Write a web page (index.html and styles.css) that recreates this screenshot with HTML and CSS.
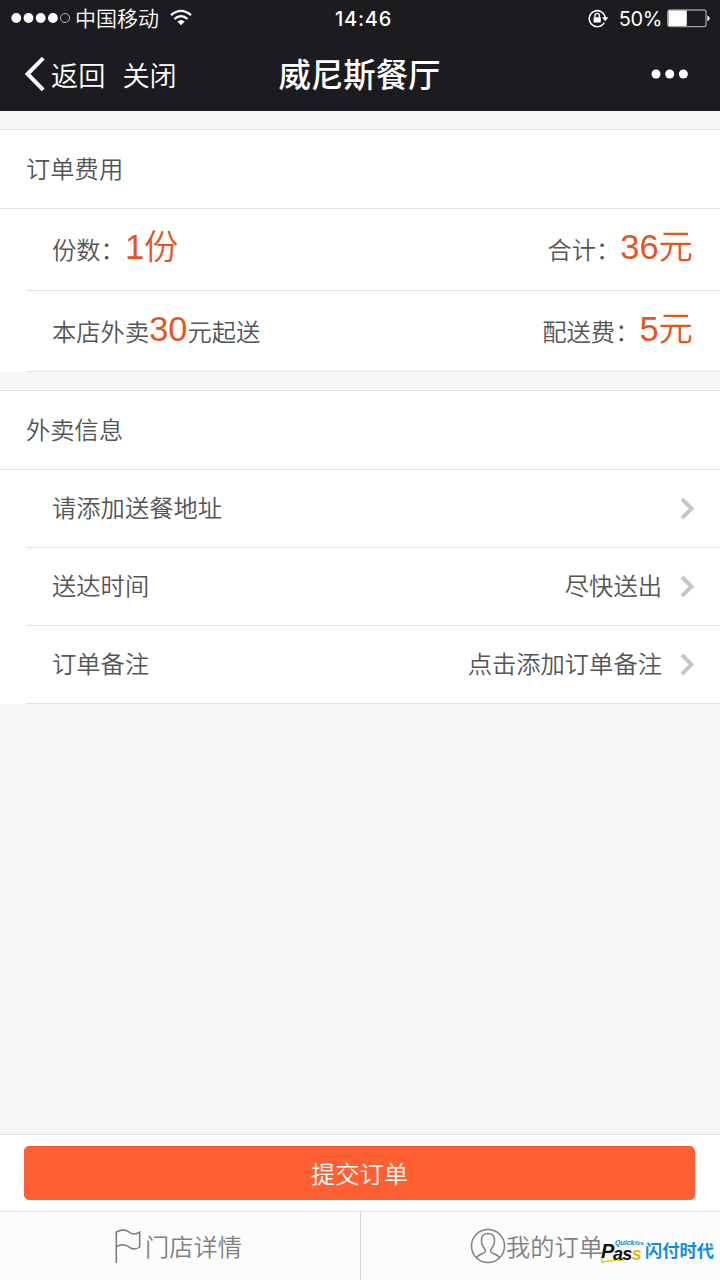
FILE: index.html
```html
<!DOCTYPE html>
<html lang="zh-CN">
<head>
<meta charset="UTF-8">
<meta name="viewport" content="width=720">
<title>威尼斯餐厅</title>
<link rel="stylesheet" href="styles.css">
</head>
<body>
<div class="page">
	<header class="header">
		<div class="status">
			<div class="status_left">
				<svg class="signal" width="62" height="12" viewBox="0 0 62 12">
					<g fill="#fff"><circle cx="5.3" cy="6" r="4.9"/><circle cx="17.5" cy="6" r="4.9"/><circle cx="29.7" cy="6" r="4.9"/><circle cx="41.9" cy="6" r="4.9"/></g>
					<circle cx="54" cy="6" r="4.5" fill="none" stroke="#b5b5b8"/>
				</svg>
				<span class="carrier">中国移动</span>
				<svg class="wifi" width="22" height="17" viewBox="0 0 22 17">
					<g fill="none" stroke="#fff" stroke-width="2.3"><path d="M1 6.2Q11 -2.4 21 6.2"/><path d="M4.4 10Q11 4.3 17.6 10"/></g>
					<path d="M7.3 12.4Q11 9.4 14.7 12.4L11 16.2z" fill="#fff"/>
				</svg>
			</div>
			<div class="time">14:46</div>
			<div class="status_right">
				<svg class="lock" width="21" height="19" viewBox="0 0 21 19">
					<path d="M16.2 13.6A8 8 0 1 1 17.2 9" fill="none" stroke="#fff" stroke-width="1.5"/>
					<path d="M14 8.2h6.4l-3.2 4z" fill="#fff"/>
					<rect x="5.6" y="8.2" width="7.2" height="5.4" rx=".6" fill="#fff"/>
					<path d="M7 8.5V6.6a2.2 2.2 0 0 1 4.4 0v1.9" fill="none" stroke="#fff" stroke-width="1.4"/>
				</svg>
				<span class="percent">50%</span>
				<svg class="battery" width="43" height="19" viewBox="0 0 43 19">
					<rect x=".7" y="1" width="38.3" height="16.6" rx="2" fill="none" stroke="#9b9b9e" stroke-width="1.3"/>
					<rect x="1.4" y="1.6" width="18.4" height="15.4" rx="1" fill="#fff"/>
					<path d="M40.4 6.4q2.2.8 2.2 2.9t-2.2 2.9z" fill="#fff"/>
				</svg>
			</div>
		</div>
		<div class="nav">
			<div class="nav_left">
				<svg class="back" width="20" height="34" viewBox="0 0 20 34"><path d="M18.2 1.2L2.6 17l15.6 15.8" fill="none" stroke="#fff" stroke-width="4"/></svg>
				<a class="nav_link">返回</a>
				<a class="nav_link">关闭</a>
			</div>
			<h1 class="nav_title">威尼斯餐厅</h1>
			<svg class="more" width="38" height="10" viewBox="0 0 38 10" fill="#fff"><circle cx="5" cy="5" r="4.5"/><circle cx="18.7" cy="5" r="4.5"/><circle cx="32.4" cy="5" r="4.5"/></svg>
		</div>
	</header>

	<section class="card">
		<h2 class="card_title">订单费用</h2>
		<div class="row fee">
			<div>份数：<em class="num">1份</em></div>
			<div>合计：<em class="num">36元</em></div>
		</div>
		<div class="row fee">
			<div>本店外卖<em class="num">30</em>元起送</div>
			<div>配送费：<em class="num">5元</em></div>
		</div>
	</section>

	<section class="card">
		<h2 class="card_title">外卖信息</h2>
		<div class="row info">
			<span>请添加送餐地址</span>
			<span class="value"><svg class="arrow" width="15" height="23" viewBox="0 0 15 23"><path d="M2 2l9.5 9.5L2 21"/></svg></span>
		</div>
		<div class="row info">
			<span>送达时间</span>
			<span class="value">尽快送出<svg class="arrow" width="15" height="23" viewBox="0 0 15 23"><path d="M2 2l9.5 9.5L2 21"/></svg></span>
		</div>
		<div class="row info">
			<span>订单备注</span>
			<span class="value">点击添加订单备注<svg class="arrow" width="15" height="23" viewBox="0 0 15 23"><path d="M2 2l9.5 9.5L2 21"/></svg></span>
		</div>
	</section>

	<footer class="footer">
		<div class="submit_bar"><button class="submit">提交订单</button></div>
		<div class="tabs">
			<a class="tab">
				<svg width="27" height="36" viewBox="0 0 27 36" fill="none" stroke="#777" stroke-width="1.5"><path d="M1.3 35V4C7 1 11 1.5 14 4s7 2.6 10.7.2v14.800C21 21.5 17 21.5 14 19S6 16 1.3 18.7"/></svg>
				<span class="tab_text flag_text">门店详情</span>
			</a>
			<a class="tab tab_order">
				<svg width="36" height="36" viewBox="0 0 36 36" fill="none" stroke="#808080" stroke-width="1.5"><circle cx="18" cy="18" r="16.5"/><path d="M6.5 29.7c1.5-3 5-3.5 8-5 1.5-.8 1-2.7-.1-4.200C12 17.5 11.300 14.5 11.5 11.5 11.800 7.5 14.5 5.5 18 5.500s6.200 2 6.500 6c.2 3-.5 6-2.900 9-1.100 1.500-1.600 3.400-.1 4.200 3 1.500 6.500 2 8 5"/></svg>
				<span class="tab_text">我的订单</span>
			</a>
		</div>
	</footer>

	<div class="watermark">
		<div class="pass">
			<svg class="swoosh" width="24" height="7" viewBox="0 0 24 7"><path d="M1 1L.5 6Q10 3 23 4 10 4.5 .5 6.5z" fill="#e8c820" stroke="#e8c820" stroke-width=".8"/></svg>
			<span class="pass_p">P</span>
			<div class="pass_rest">
				<span class="quick">Quick<small>Xtra</small></span>
				<span class="pass_ass">as<i>s</i></span>
			</div>
		</div>
		<span class="brand">闪付时代</span>
	</div>
</div>
</body>
</html>
```
FILE: styles.css
```css
*{
	box-sizing: border-box;
}
body{
	margin: 0;
	background-color: #f7f7f7;
	font-family: "Liberation Sans", "Noto Sans CJK SC", sans-serif;
	font-weight: 350;
	color: #555;
}
.page{
	position: relative;
	display: flex;
	flex-direction: column;
	width: 720px;
	height: 1280px;
	overflow: hidden;
}
svg{
	display: block;
	flex: none;
}
.header{
	height: 111px;
	background-color: #1c1b20;
	color: #fff;
}
.status{
	display: grid;
	grid-template-columns: 1fr auto 1fr;
	align-items: center;
	height: 36px;
	padding: 0 10px 0 11px;
}
.status_left,
.status_right{
	display: flex;
	align-items: center;
}
.status_right{
	justify-content: flex-end;
}
.carrier{
	margin-left: 2px;
	padding-top: 2px;
	font-size: 21px;
	line-height: 34px;
}
.wifi{
	margin: 0 0 2px 11px;
}
.time{
	padding-left: 6px;
	padding-top: 1px;
	font-family: Inter, sans-serif;
	font-size: 20px;
	font-weight: 500;
	letter-spacing: .8px;
}
.lock{
	margin-right: -1px;
}
.percent{
	margin: 0 5px 0 11px;
	padding-top: 1px;
	font-family: Inter, sans-serif;
	font-size: 20px;
	font-weight: 400;
	letter-spacing: -.4px;
}
.nav{
	display: grid;
	grid-template-columns: 1fr auto 1fr;
	align-items: center;
	height: 75px;
	padding: 0 31px 0 25px;
}
.nav_left{
	display: flex;
	align-items: center;
}
.nav_link{
	margin: 0 17px 0 0;
	padding-top: 5px;
	font-size: 27.2px;
	line-height: 71px;
}
.back{
	margin-right: 6px;
}
.nav_title{
	margin: 0 0 0 5px;
	padding-top: 3px;
	font-size: 32.4px;
	font-weight: 500;
	line-height: 72px;
}
.more{
	justify-self: end;
}
.card{
	margin-top: 18px;
	border-top: 1px solid #e3e3e3;
	background-color: #fff;
}
.card_title{
	height: 79px;
	margin: 0;
	padding-left: 26px;
	border-bottom: 1px solid #e3e3e3;
	font-size: 24.3px;
	font-weight: 350;
	line-height: 79px;
}
.row{
	display: flex;
	justify-content: space-between;
	margin-left: 26px;
	padding: 0 27px 0 26px;
	border-bottom: 1px solid #e3e3e3;
	font-size: 24.3px;
}
.fee{
	height: 82px;
	line-height: 77px;
}
.fee + .fee{
	height: 81px;
}
.num{
	color: #e2571e;
	font-size: 34.4px;
	font-style: normal;
}
.info{
	height: 78px;
	line-height: 77px;
}
.value{
	display: flex;
	align-items: center;
}
.arrow{
	margin-left: 18px;
	margin-right: -2px;
	fill: none;
	stroke: #c7c7c7;
	stroke-width: 4;
}
.footer{
	margin-top: auto;
	border-top: 1px solid #e0e0e0;
	background-color: #fff;
}
.submit_bar{
	height: 77px;
	padding: 11px 24px 0;
	border-bottom: 1px solid #e3e3e3;
}
.submit{
	display: block;
	width: 671px;
	height: 54px;
	padding: 3px 0 0;
	border: 1px solid #ee6038;
	border-radius: 5px;
	background-color: #ff5f33;
	color: #fff;
	font: inherit;
	font-size: 24.3px;
	line-height: 49px;
}
.tabs{
	display: grid;
	grid-template-columns: 1fr 1fr;
	height: 68px;
	background-color: #fcfcfc;
}
.tab{
	display: flex;
	align-items: center;
	justify-content: center;
	padding-right: 3px;
	color: #808080;
}
.tab + .tab{
	border-left: 1px solid #d5d5d5;
}
.tab_order{
	padding-right: 8px;
}
.tab_text{
	padding-top: 3px;
	font-size: 24.2px;
	line-height: 65px;
}
.flag_text{
	margin-left: 3px;
}
/* logo laid over the right tab */
.watermark{
	position: absolute;
	left: 601px;
	bottom: 17px;
	display: flex;
	align-items: flex-end;
	height: 26px;
}
.pass{
	position: relative;
	display: flex;
	width: 44px;
	height: 24px;
	color: #111;
	font-family: "Liberation Sans", sans-serif;
	font-style: italic;
	font-weight: 700;
}
.pass_p{
	position: relative;
	width: 12px;
	font-size: 20px;
	line-height: 24px;
}
.pass_rest{
	position: relative;
	display: flex;
	flex-direction: column;
}
.quick{
	padding-left: 2px;
	color: #0f83c8;
	font-size: 7px;
	line-height: 7px;
	white-space: nowrap;
}
.quick small{
	font-size: 4.5px;
}
.pass_ass{
	font-size: 18px;
	line-height: 14px;
	letter-spacing: -.7px;
}
.pass_ass i{
	color: #d6bb20;
}
.swoosh{
	position: absolute;
	left: 0;
	bottom: 0;
}
.brand{
	color: #0f8fd2;
	font-size: 17.3px;
	font-weight: 700;
	line-height: 24px;
}
```
